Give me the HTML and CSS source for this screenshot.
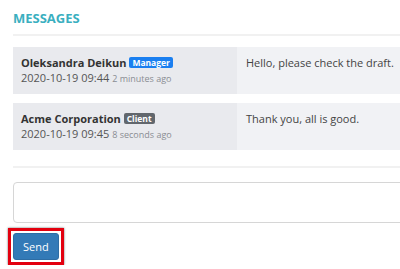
FILE: index.html
```html
<!DOCTYPE html>
<html>
<head>
    <title>Messages</title>
    <link rel="stylesheet" href="styles.css">
</head>
<body>
    <div class="page">
        <h2 class="section-title">MESSAGES</h2>
        <div class="messages">
            <div class="message">
                <div class="message-meta">
                    <div class="author">Oleksandra Deikun <span class="badge badge-manager">Manager</span></div>
                    <div class="date">2020-10-19 09:44 <span class="ago">2 minutes ago</span></div>
                </div>
                <div class="message-body">Hello, please check the draft.</div>
            </div>
            <div class="message">
                <div class="message-meta">
                    <div class="author">Acme Corporation <span class="badge badge-client">Client</span></div>
                    <div class="date">2020-10-19 09:45 <span class="ago">8 seconds ago</span></div>
                </div>
                <div class="message-body">Thank you, all is good.</div>
            </div>
        </div>
        <form class="reply-form">
            <textarea class="reply-input" name="message"></textarea>
            <span class="highlight">
                <button type="submit" class="btn btn-primary">Send</button>
            </span>
        </form>
    </div>
</body>
</html>
```

FILE: styles.css
```css
:root {
    --teal: #3aafc0;
    --meta-bg: #e9eaee;
    --body-bg: #f1f2f5;
    --text-color: #444;
    --muted: #8a8d93;
    --line: #f1f1f1;
}
body {
    margin: 0;
    font-family: "Open Sans", Arial, sans-serif;
    font-size: 11px;
    line-height: 15px;
    color: var(--text-color);
    background: #fff;
    overflow: hidden;
}
.page {
    width: 700px;
    padding: 9px 0 0 13px;
}
.section-title {
    margin: 0;
    font-size: 13px;
    line-height: 19px;
    font-weight: 700;
    color: var(--teal);
    padding-bottom: 6px;
    border-bottom: 2px solid var(--line);
}
.messages {
    display: flex;
    flex-direction: column;
    gap: 9px;
    margin-top: 11px;
    padding-bottom: 16px;
    border-bottom: 2px solid var(--line);
}
.message {
    display: flex;
}
.message-meta {
    width: 224px;
    padding: 8px 8px;
    box-sizing: border-box;
    background: var(--meta-bg);
}
.message-body {
    flex: 1;
    padding: 8px 9px;
    background: var(--body-bg);
}
.author {
    font-weight: 700;
    color: #333;
}
.badge {
    display: inline-block;
    font-size: 8.5px;
    line-height: 11px;
    padding: 0 3px;
    border-radius: 2px;
    color: #fff;
    font-weight: 700;
    vertical-align: 1px;
}
.badge-manager {
    background: #1a7ff0;
}
.badge-client {
    background: #62676d;
}
.date {
    color: #555;
}
.ago {
    font-size: 9px;
    color: var(--muted);
}
.reply-form {
    padding-top: 14px;
}
.reply-input {
    display: block;
    width: 100%;
    height: 41px;
    box-sizing: border-box;
    border: 1px solid #d6d6d6;
    border-radius: 4px;
    resize: none;
    margin: 0 0 5px;
}
.highlight {
    display: inline-block;
    margin-left: -5px;
    padding: 2px;
    border: 3px solid #e3000f;
    box-shadow: 0 0 2px rgba(0, 0, 0, 0.6);
}
.btn {
    display: block;
    font-family: inherit;
    font-size: 11px;
    line-height: 15px;
    padding: 5px 9px;
    border-radius: 3px;
    cursor: pointer;
}
.btn-primary {
    background: #337ab7;
    border: 1px solid #2e6da4;
    color: #fff;
}
```
